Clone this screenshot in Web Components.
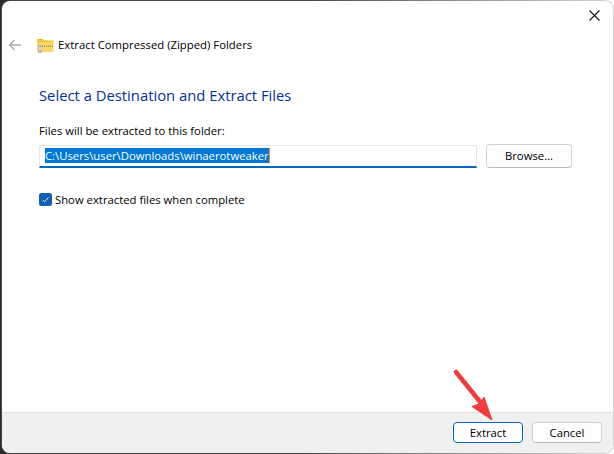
<!DOCTYPE html>
<html lang="en"><head><meta charset="utf-8"><title>Extract Compressed (Zipped) Folders</title>
<style>html,body{margin:0;padding:0;height:100%}body{font-family:"Open Sans","Noto Sans",sans-serif;font-size:12px;color:#000}</style></head>
<body>
<wiz-desktop>
<wiz-dialog>
<wiz-header slot="header" title-text="Extract Compressed (Zipped) Folders"></wiz-header>
<wiz-page heading="Select a Destination and Extract Files">
<path-field label="Files will be extracted to this folder:" value="C:\Users\user\Downloads\winaerotweaker"></path-field>
<check-row>Show extracted files when complete</check-row>
</wiz-page>
<wiz-footer slot="footer">
<win-button primary>Extract</win-button>
<win-button>Cancel</win-button>
</wiz-footer>
</wiz-dialog>
<red-arrow></red-arrow>
</wiz-desktop>
<script>
const FONT='"Open Sans","Noto Sans",sans-serif';
function def(name,html,init){customElements.define(name,class extends HTMLElement{connectedCallback(){if(this.shadowRoot)return;const r=this.attachShadow({mode:'open'});r.innerHTML=html;if(init)init(this,r);}});}
def('wiz-desktop',`<style>:host{display:block;position:relative;width:614px;height:454px;overflow:hidden;box-sizing:border-box;padding:1px 1px 1px 2px;background:linear-gradient(90deg,#2d2d2d 0,#2d2d2d 300px,#fff 600px);font-family:${FONT}}</style><slot></slot>`);
def('wiz-dialog',`<style>:host{display:flex;flex-direction:column;height:100%;background:#fff;border-radius:8px;overflow:hidden;box-shadow:0 0 0 1px rgba(120,120,120,.35)}
.m{flex:1;display:flex;flex-direction:column;min-height:0}</style>
<slot name="header"></slot><div class="m"><slot></slot></div><slot name="footer"></slot>`);
def('wiz-header',`<style>:host{display:flex;align-items:center;height:58px;padding:30px 0 0 6px;box-sizing:border-box;position:relative;color:#000}
.back{width:14px;height:12px;margin-right:15px;flex:none}
.folder{width:17px;height:15px;margin-right:4px;flex:none}
.t{font-size:11.35px;line-height:16px;white-space:nowrap}
.x{position:absolute;right:13px;top:9px;width:11px;height:11px}</style>
<svg class="back" viewBox="0 0 14 12"><path d="M13 6H1.5M6.5 1L1.5 6l5 5" fill="none" stroke="#a9a9a9" stroke-width="1.3"/></svg>
<svg class="folder" viewBox="0 0 17 15"><path d="M0 2.2C0 1.3.6 1 1.2 1h4.5l1.6 1.7H0z" fill="#f5b400"/><rect x="0" y="2.6" width="16.5" height="11.4" rx=".8" fill="#fbd566"/><rect x="0" y="2.6" width="16.5" height="1.6" fill="#f8c33a"/><path d="M5 8.3h11" stroke="#9a8f6a" stroke-width="1.4" stroke-dasharray="1 1"/><rect x="1" y="7" width="3.6" height="8" fill="#b9b9b9"/><rect x="2" y="9.5" width="1.6" height="2.4" fill="#eee"/></svg>
<span class="t"></span>
<svg class="x" viewBox="0 0 11 11"><path d="M.5.5l10 10M10.5.5l-10 10" stroke="#111" stroke-width="1.1" fill="none"/></svg>`,(h,r)=>{r.querySelector('.t').textContent=h.getAttribute('title-text');});
def('wiz-page',`<style>:host{display:flex;flex-direction:column;padding:25px 41px 0 37px}
h1{margin:0 0 17px;font-weight:400;font-size:14.8px;line-height:22px;color:#003399;white-space:nowrap}</style><h1></h1><slot></slot>`,(h,r)=>{r.querySelector('h1').textContent=h.getAttribute('heading');});
def('path-field',`<style>:host{display:block;font-size:11.3px;color:#000;margin-bottom:24px}
.l{line-height:16px;margin-bottom:5px}
.row{display:flex;gap:9px;align-items:flex-start}
.box{box-sizing:border-box;width:438px;height:23px;margin-top:1px;border:1px solid #e6e6e6;border-bottom:2px solid #0067c0;border-radius:2px 2px 0 0;padding:2px 0 0 5px;line-height:15px;display:flex;align-items:flex-start}
.sel{background:#0078d7;color:#fff;height:15px;white-space:nowrap;border-right:1px solid #f08a24}
</style><div class="l"></div><div class="row"><div class="box"><span class="sel"></span></div><win-button wide>Browse...</win-button></div>`,(h,r)=>{r.querySelector('.l').textContent=h.getAttribute('label');r.querySelector('.sel').textContent=h.getAttribute('value');});
def('check-row',`<style>:host{display:flex;align-items:center;gap:3px;height:15px;font-size:11.3px;line-height:15px;color:#000}
svg{width:13px;height:13px;flex:none}</style>
<svg viewBox="0 0 13 13"><rect width="13" height="13" rx="2.5" fill="#0f5fb4"/><path d="M3.5 6.8l2 2 4-4.4" fill="none" stroke="#dfeafa" stroke-width="1"/></svg><span><slot></slot></span>`);
def('win-button',`<style>:host{box-sizing:border-box;display:inline-flex;align-items:center;justify-content:center;width:70px;height:21px;border:1px solid #d0d0d0;border-bottom-color:#bcbcbc;border-radius:4px;background:#fdfdfd;font-size:11.3px;line-height:16px;color:#000;flex:none}
:host([primary]){border:1.5px solid #0067c0;border-radius:4px}
:host([wide]){width:86px;height:24px}</style><slot></slot>`);
def('wiz-footer',`<style>:host{display:flex;justify-content:flex-end;align-items:center;gap:9px;height:41px;box-sizing:border-box;padding:0 11px 1px 0;background:#f0f0f0;border-top:1px solid #dfdfdf}</style><slot></slot>`);
def('red-arrow',`<style>:host{position:absolute;left:450px;top:367px;width:45px;height:55px;display:block}svg{display:block}</style>
<svg width="45" height="55" viewBox="0 0 45 55"><path d="M6 5L31 36" stroke="#ef3d3d" stroke-width="4.6" stroke-linecap="round" fill="none"/><path d="M42 53L22 39.5 29 37 34 30z" fill="#ef3d3d" stroke="#ef3d3d" stroke-width="1" stroke-linejoin="round"/></svg>`);
</script>
</body></html>
